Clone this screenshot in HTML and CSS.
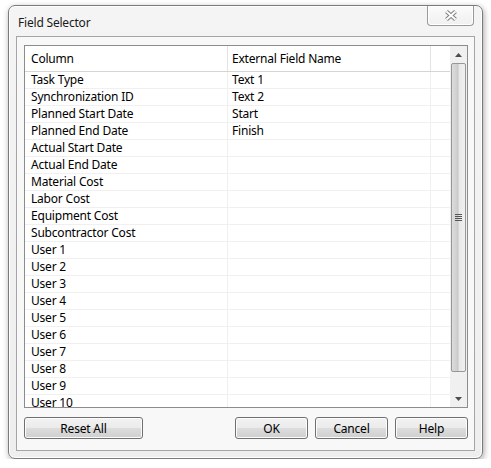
FILE: index.html
```html
<!DOCTYPE html>
<html lang="en">
<head>
    <meta charset="UTF-8">
    <title>Field Selector</title>
    <link rel="stylesheet" href="styles.css">
</head>
<body>
    <div class="window">
        <div class="titlebar">
            <span class="title">Field Selector</span>
            <div class="close-btn">
                <svg width="12" height="11" viewBox="0 0 12 11">
                    <path d="M1.5 1.5 L10.5 9.5 M10.5 1.5 L1.5 9.5" stroke="#7e7e7e" stroke-width="4" fill="none"/>
                    <path d="M1.5 1.5 L10.5 9.5 M10.5 1.5 L1.5 9.5" stroke="#ffffff" stroke-width="2" fill="none"/>
                </svg>
            </div>
        </div>
        <div class="client">
            <div class="listbox">
                <div class="grid-area">
                    <div class="header">
                        <div class="cell col1">Column</div>
                        <div class="cell col2">External Field Name</div>
                        <div class="cell col3"></div>
                    </div>
                    <div class="rows">
                        <div class="row"><div class="cell col1">Task Type</div><div class="cell col2">Text 1</div><div class="cell col3"></div></div>
                        <div class="row"><div class="cell col1">Synchronization ID</div><div class="cell col2">Text 2</div><div class="cell col3"></div></div>
                        <div class="row"><div class="cell col1">Planned Start Date</div><div class="cell col2">Start</div><div class="cell col3"></div></div>
                        <div class="row"><div class="cell col1">Planned End Date</div><div class="cell col2">Finish</div><div class="cell col3"></div></div>
                        <div class="row"><div class="cell col1">Actual Start Date</div><div class="cell col2"></div><div class="cell col3"></div></div>
                        <div class="row"><div class="cell col1">Actual End Date</div><div class="cell col2"></div><div class="cell col3"></div></div>
                        <div class="row"><div class="cell col1">Material Cost</div><div class="cell col2"></div><div class="cell col3"></div></div>
                        <div class="row"><div class="cell col1">Labor Cost</div><div class="cell col2"></div><div class="cell col3"></div></div>
                        <div class="row"><div class="cell col1">Equipment Cost</div><div class="cell col2"></div><div class="cell col3"></div></div>
                        <div class="row"><div class="cell col1">Subcontractor Cost</div><div class="cell col2"></div><div class="cell col3"></div></div>
                        <div class="row"><div class="cell col1">User 1</div><div class="cell col2"></div><div class="cell col3"></div></div>
                        <div class="row"><div class="cell col1">User 2</div><div class="cell col2"></div><div class="cell col3"></div></div>
                        <div class="row"><div class="cell col1">User 3</div><div class="cell col2"></div><div class="cell col3"></div></div>
                        <div class="row"><div class="cell col1">User 4</div><div class="cell col2"></div><div class="cell col3"></div></div>
                        <div class="row"><div class="cell col1">User 5</div><div class="cell col2"></div><div class="cell col3"></div></div>
                        <div class="row"><div class="cell col1">User 6</div><div class="cell col2"></div><div class="cell col3"></div></div>
                        <div class="row"><div class="cell col1">User 7</div><div class="cell col2"></div><div class="cell col3"></div></div>
                        <div class="row"><div class="cell col1">User 8</div><div class="cell col2"></div><div class="cell col3"></div></div>
                        <div class="row"><div class="cell col1">User 9</div><div class="cell col2"></div><div class="cell col3"></div></div>
                        <div class="row"><div class="cell col1">User 10</div><div class="cell col2"></div><div class="cell col3"></div></div>
                    </div>
                </div>
                <div class="scrollbar">
                    <div class="arrow up">
                        <svg width="7" height="4" viewBox="0 0 7 4"><path d="M0 4 L3.5 0 L7 4 Z" fill="#4d4d4d"/></svg>
                    </div>
                    <div class="track">
                        <div class="thumb">
                            <div class="grip">
                                <span></span><span></span><span></span><span></span>
                            </div>
                        </div>
                    </div>
                    <div class="arrow down">
                        <svg width="7" height="4" viewBox="0 0 7 4"><path d="M0 0 L3.5 4 L7 0 Z" fill="#4d4d4d"/></svg>
                    </div>
                </div>
            </div>
            <div class="buttons">
                <button class="btn reset">Reset All</button>
                <div class="spacer"></div>
                <button class="btn">OK</button>
                <button class="btn">Cancel</button>
                <button class="btn">Help</button>
            </div>
        </div>
    </div>
</body>
</html>
```

FILE: styles.css
```css
body {
    margin: 0;
    padding: 0;
    background: #ffffff;
    font-family: 'Noto Sans', 'Open Sans', sans-serif;
    font-size: 12px;
    letter-spacing: -0.2px;
    color: #000;
}
.window {
    margin: 5px 0 0 8px;
    width: 475px;
    height: 454px;
    box-sizing: border-box;
    border: 1px solid #7a7a7a;
    border-radius: 7px;
    background: linear-gradient(#f4f4f4, #eeeeee);
    box-shadow: 1px 2px 6px rgba(0, 0, 0, 0.35), inset 0 0 0 1px #ffffff;
    display: flex;
    flex-direction: column;
    padding: 0 7px 7px 7px;
}
.titlebar {
    height: 30px;
    display: flex;
    align-items: flex-start;
    justify-content: space-between;
}
.title {
    margin: 8px 0 0 2px;
    color: #1a1a1a;
}
.close-btn {
    width: 45px;
    height: 19px;
    border: 1px solid #9a9a9a;
    border-top: none;
    border-radius: 0 0 4px 4px;
    background: linear-gradient(#fbfbfb, #f0f0f0);
    display: flex;
    align-items: center;
    justify-content: center;
    margin-right: 1px;
    box-shadow: inset 0 0 0 1px #ffffff;
}
.client {
    flex: 1;
    border: 1px solid #a5a5a5;
    background: #f8f8f8;
    padding: 8px 6px 10px 7px;
    display: flex;
    flex-direction: column;
}
.listbox {
    height: 361px;
    border: 1px solid #8c8c8c;
    background: #ffffff;
    display: flex;
    overflow: hidden;
}
.grid-area {
    flex: 1;
    overflow: hidden;
}
.header {
    display: flex;
    height: 25px;
    border-bottom: 1px solid #d5d5d5;
}
.header .cell {
    line-height: 26px;
}
.row {
    display: flex;
    height: 17px;
    border-bottom: 1px solid #f0f0f0;
    box-sizing: border-box;
}
.cell {
    line-height: 16px;
    padding-left: 6px;
    box-sizing: border-box;
    white-space: nowrap;
    overflow: hidden;
}
.col1 {
    width: 203px;
    border-right: 1px solid #f0f0f0;
}
.col2 {
    width: 203px;
    padding-left: 4px;
    border-right: 1px solid #f0f0f0;
}
.col3 {
    flex: 1;
}
.header .col1,
.header .col2 {
    border-right-color: #e3e3e3;
}
.scrollbar {
    width: 17px;
    display: flex;
    flex-direction: column;
    background: #f0f0f0;
}
.arrow {
    height: 17px;
    display: flex;
    align-items: center;
    justify-content: center;
}
.track {
    flex: 1;
    display: flex;
    flex-direction: column;
    padding: 0 0 18px 0;
}
.thumb {
    flex: 1;
    margin: 0 1px;
    border: 1px solid #979797;
    border-radius: 2px;
    background: linear-gradient(to right, #dcdcdc, #cfcfcf 40%, #c4c4c4 45%, #e8e8e8 55%, #f0f0f0);
    display: flex;
    align-items: center;
    justify-content: center;
}
.grip {
    display: flex;
    flex-direction: column;
    gap: 1px;
}
.grip span {
    display: block;
    width: 7px;
    height: 1px;
    background: #555;
}
.buttons {
    display: flex;
    margin-top: 9px;
    gap: 7px;
}
.spacer {
    flex: 1;
}
.btn {
    width: 73px;
    height: 22px;
    border: 1px solid #707070;
    border-radius: 3px;
    background: linear-gradient(#f2f2f2 0%, #ebebeb 50%, #dddddd 51%, #cfcfcf 100%);
    box-shadow: inset 0 0 0 1px #fcfcfc;
    font-family: 'Noto Sans', 'Open Sans', sans-serif;
    font-size: 12px;
    letter-spacing: -0.2px;
    color: #000;
    padding: 0;
}
.btn.reset {
    width: 119px;
}
```
